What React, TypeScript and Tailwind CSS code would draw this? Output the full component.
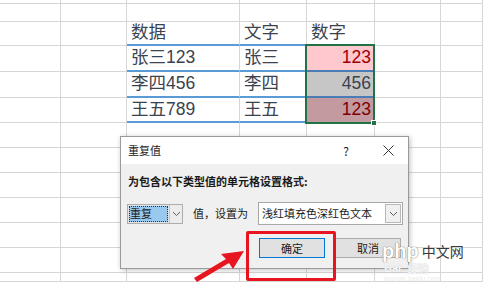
import React from 'react';

type Cell = { text?: string; cls: string; textCls?: string };

const GRID = 'border-r border-b border-[#d6d6d6]';
const BLUE = 'border-r border-r-[#d6d6d6] border-b-2 border-b-[#5b9bd5]';

// rows 0..12, cols 0..6
const buildCells = (): Cell[][] => {
  const rows: Cell[][] = [];
  for (let r = 0; r < 13; r++) {
    const row: Cell[] = [];
    for (let c = 0; c < 7; c++) row.push({ cls: GRID });
    rows.push(row);
  }
  // header + data rows of the table
  const body: [string, string][] = [
    ['数据', '文字'],
    ['张三123', '张三'],
    ['李四456', '李四'],
    ['王五789', '王五'],
  ];
  body.forEach(([a, b], i) => {
    rows[2 + i][2] = { text: a, cls: BLUE };
    rows[2 + i][3] = { text: b, cls: BLUE };
  });
  rows[2][4] = { text: '数字', cls: BLUE };
  rows[3][4] = {
    text: '123',
    cls: 'bg-[#ffc7ce] border-b-2 border-b-[#4a7db5] justify-end',
    textCls: 'text-[#9c0006]',
  };
  rows[4][4] = {
    text: '456',
    cls: 'bg-[#c6c6c6] border-b-2 border-b-[#4a7db5] justify-end',
  };
  rows[5][4] = {
    text: '123',
    cls: 'bg-[#c39a9f] border-b border-[#d6d6d6] justify-end',
    textCls: 'text-[#7d0005]',
  };
  return rows;
};

const Chevron = () => (
  <svg width="9" height="6" viewBox="0 0 9 6" fill="none">
    <path d="M1 1l3.5 3.5L8 1" stroke="#606060" strokeWidth="1" />
  </svg>
);

export default function App() {
  const cells = buildCells();

  return (
    <div className="relative w-[483px] h-[282px] overflow-hidden bg-white font-['Liberation_Sans','Noto_Sans_CJK_SC',sans-serif]">
      {/* spreadsheet */}
      <div className="grid grid-cols-[61px_66px_113px_67px_68px_66px_1fr] grid-rows-[4px_18px_24px_26px_26px_25px_25px_25px_25px_25px_25px_25px_1fr] w-full h-full">
        {cells.map((row, r) =>
          row.map((cell, c) => (
            <div
              key={`${r}-${c}`}
              className={`flex items-center px-[4px] overflow-hidden ${cell.cls}`}
            >
              {cell.text && (
                <span
                  className={`text-[17.5px] leading-none whitespace-nowrap ${cell.textCls ?? 'text-[#3b4250]'}`}
                >
                  {cell.text}
                </span>
              )}
            </div>
          ))
        )}
      </div>

      {/* selection outline */}
      <div className="absolute left-[305px] top-[44px] w-[70px] h-[80px] border-2 border-[#217346]" />
      <div className="absolute left-[371px] top-[120px] w-[6px] h-[6px] bg-[#217346] border border-white" />

      {/* dialog */}
      <div className="absolute left-[120px] top-[136px] w-[289px] h-[133px] border border-[#9a9a9a] bg-[#f0f0f0] shadow-[1px_1px_5px_rgba(0,0,0,0.25)] flex flex-col font-['Noto_Sans_CJK_SC',sans-serif] text-[11px] text-[#1a1a1a]">
        <div className="h-[27px] shrink-0 bg-white flex items-center pl-[7px] pr-[14px]">
          <span>重复值</span>
          <span className="ml-auto text-[12px]">?</span>
          <svg className="ml-[34px]" width="11" height="11" viewBox="0 0 11 11">
            <path d="M0.5 0.5l10 10M10.5 0.5l-10 10" stroke="#333" strokeWidth="1" />
          </svg>
        </div>

        <div className="pl-[7px] pt-[10px] leading-[15px] font-bold">为包含以下类型值的单元格设置格式:</div>

        <div className="flex items-center h-[23px] mt-[13px] pl-[6px] pr-[5px]">
          <div className="flex h-[20px] w-[56px] border border-[#adadad] bg-[#e5e5e5]">
            <div className="w-[39px] m-[1px] bg-[#99c9ef] border border-dotted border-[#333] flex items-center leading-none">
              重复
            </div>
            <div className="flex-1 border-l border-[#c8c8c8] bg-[#ececec] flex items-center justify-center">
              <Chevron />
            </div>
          </div>
          <span className="ml-[10px]">值，设置为</span>
          <div className="ml-auto flex items-center w-[145px] h-[23px] border border-[#a8a8a8] bg-white pl-[3px] pr-[1px]">
            <span>浅红填充色深红色文本</span>
            <div className="ml-auto w-[16px] h-[19px] border border-[#b8b8b8] bg-[#f0f0f0] flex items-center justify-center">
              <Chevron />
            </div>
          </div>
        </div>

        <div className="flex justify-end gap-[10px] mt-[13px] pr-[7px]">
          <div className="w-[66px] h-[20px] border border-[#0078d7] bg-[#e1e1e1] flex items-center justify-center">
            确定
          </div>
          <div className="w-[66px] h-[20px] border border-[#adadad] bg-[#e1e1e1] flex items-center justify-center">
            取消
          </div>
        </div>
      </div>

      {/* annotation: red box and arrow */}
      <div className="absolute left-[246px] top-[231px] w-[90px] h-[50px] border-[3px] border-[#e8141f] rounded-[2px]" />
      <svg className="absolute left-0 top-0" width="483" height="282" viewBox="0 0 483 282">
        <polygon
          points="244,251 221,254 226,259 194,278 197,282 229,263 233,269"
          fill="#e8141f"
        />
      </svg>

      {/* watermark */}
      <div className="absolute left-[382px] top-[241px] flex items-center gap-[3px]">
        <span className="text-[20px] font-bold leading-none text-white font-['Liberation_Sans',sans-serif] [text-shadow:0_0_1px_#777,0_0_1px_#777]">
          php
        </span>
        <span className="text-[14px] leading-none text-[#3a3a3a] font-['Noto_Sans_CJK_SC',sans-serif]">中文网</span>
      </div>
      <div className="absolute left-[384px] top-[262px] flex items-center gap-[6px] h-[12px] text-[11px] leading-[11px] font-bold text-[#f4f4f4] [text-shadow:0_0_1px_#c8c8c8]">
        <span className="font-['Liberation_Sans',sans-serif]">Bai</span>
        <span className="font-['Noto_Sans_CJK_SC',sans-serif]">经验</span>
      </div>
      <div className="absolute left-[384px] top-[276px] text-[7px] leading-[6px] text-[#ececec] font-['Liberation_Sans',sans-serif]">
        jingyan.baidu.com
      </div>
    </div>
  );
}
